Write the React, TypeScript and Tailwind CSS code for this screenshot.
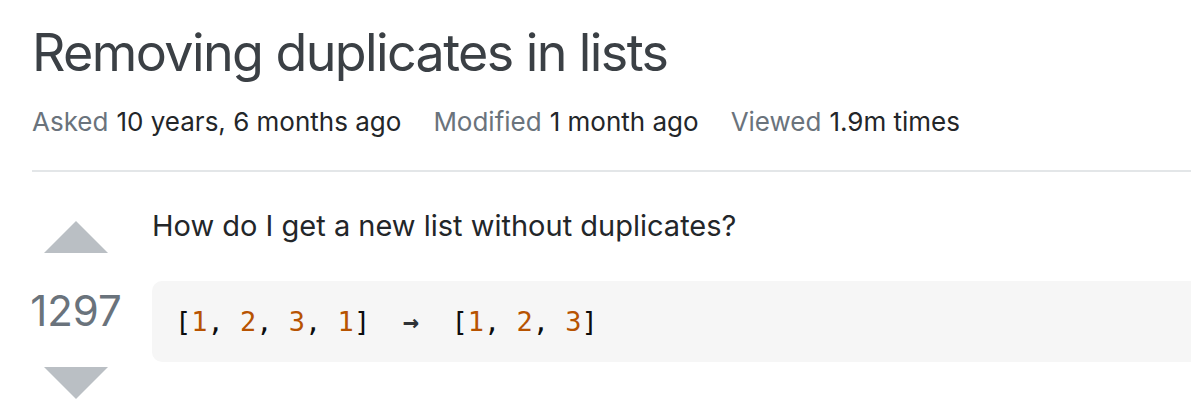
import React from 'react'

const sans = { fontFamily: 'Inter, "Liberation Sans", Arial, sans-serif' }

function MetaItem({ label, value }: { label: string; value: string }) {
    return (
        <div className="flex items-baseline whitespace-nowrap">
            <span className="text-[#6a737c] mr-[8px]">{label}</span>
            <span className="text-[#232629]">{value}</span>
        </div>
    )
}

function Num({ children }: { children: React.ReactNode }) {
    return <span className="text-[#b75301]">{children}</span>
}

export default function App() {
    return (
        <div className="w-screen h-screen overflow-hidden bg-white">
            <div className="w-[1240px] pl-[32px]" style={sans}>
                <h1 className="text-[52px] leading-[73px] text-[#3b4045] pt-[16px] font-normal tracking-[-1.6px]">Removing duplicates in lists</h1>
                <div className="flex gap-[32px] text-[26px] leading-[39px] pt-[13px] pb-[29px]">
                    <MetaItem label="Asked" value="10 years, 6 months ago" />
                    <MetaItem label="Modified" value="1 month ago" />
                    <MetaItem label="Viewed" value="1.9m times" />
                </div>
                <div className="h-[2px] bg-[#e3e6e8]" />

                <div className="flex gap-[32px] pt-[31px]">
                    <div className="w-[88px] flex flex-col items-center shrink-0">
                        <svg width="72" height="72" viewBox="0 0 36 36" className="block">
                            <path d="M2 25h32L18 9z" fill="#babfc4" />
                        </svg>
                        <div className="h-[70px] flex items-center justify-center text-[42px] text-[#6a737c]">1297</div>
                        <svg width="72" height="72" viewBox="0 0 36 36" className="block">
                            <path d="M2 11h32L18 27z" fill="#babfc4" />
                        </svg>
                    </div>
                    <div className="flex-1 min-w-0">
                        <p className="text-[29px] leading-[45px] text-[#232629] mb-[33px]">How do I get a new list without duplicates?</p>
                        <pre
                            className="bg-[#f6f6f6] rounded-[10px] px-[23px] pt-[23px] pb-[22px] text-[27px] leading-[36px] text-[#0c0d0e]"
                            style={{ fontFamily: '"DejaVu Sans Mono", "Liberation Mono", monospace' }}
                        >
                            [<Num>1</Num>, <Num>2</Num>, <Num>3</Num>, <Num>1</Num>]  <span className="font-bold text-[#2f3337]">→</span>  [<Num>1</Num>, <Num>2</Num>, <Num>3</Num>]
                        </pre>
                    </div>
                </div>
            </div>
        </div>
    )
}
